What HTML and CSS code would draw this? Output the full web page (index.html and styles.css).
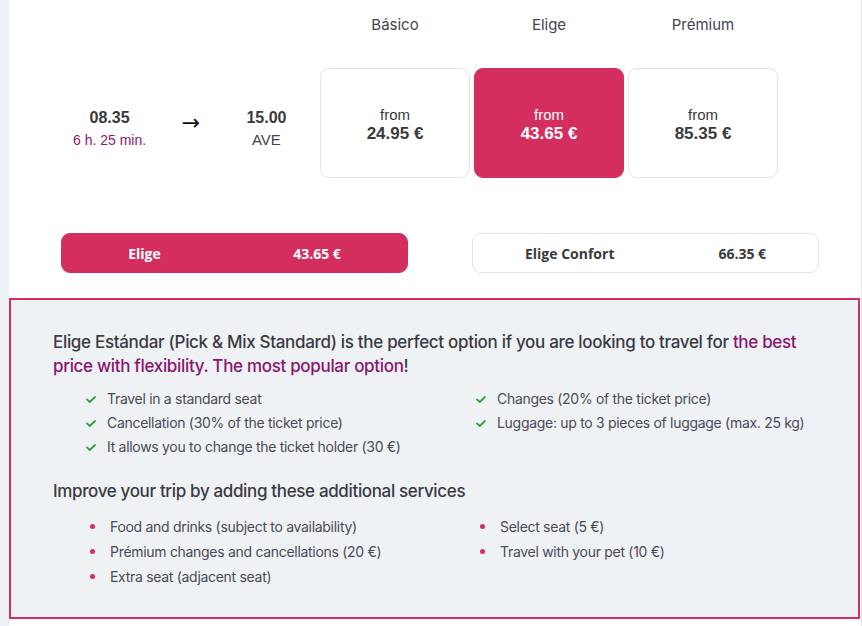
FILE: index.html
```html
<!DOCTYPE html>
<html lang="en">
<head>
<meta charset="utf-8">
<title>Fares</title>
<link rel="stylesheet" href="styles.css">
</head>
<body>
<div class="page">
  <section class="fares">
    <div class="times-head"></div>
    <div class="fare-label">Básico</div>
    <div class="fare-label">Elige</div>
    <div class="fare-label">Prémium</div>

    <div class="trip">
      <div class="stop">
        <div class="time">08.35</div>
        <div class="duration">6 h. 25 min.</div>
      </div>
      <div class="arrow">→</div>
      <div class="stop">
        <div class="time">15.00</div>
        <div class="train">AVE</div>
      </div>
    </div>
    <div class="card">
      <span class="from">from</span>
      <span class="price">24.95 €</span>
    </div>
    <div class="card card-active">
      <span class="from">from</span>
      <span class="price">43.65 €</span>
    </div>
    <div class="card">
      <span class="from">from</span>
      <span class="price">85.35 €</span>
    </div>
  </section>

  <section class="options">
    <div class="option option-active"><span>Elige</span><span>43.65 €</span></div>
    <div class="option"><span>Elige Confort</span><span>66.35 €</span></div>
  </section>

  <section class="info">
    <p class="lead">Elige Estándar (Pick &amp; Mix Standard) is the perfect option if you are looking to travel for <span class="hl">the best</span> <span class="hl">price with flexibility. The most popular option</span>!</p>
    <ul class="checks">
      <li><svg class="tick" viewBox="0 0 10 7" width="10" height="7"><path d="M1 3.4 L3.8 6 L9 1" fill="none" stroke="#2ea043" stroke-width="1.8" stroke-linecap="round" stroke-linejoin="round"/></svg>Travel in a standard seat</li>
      <li><svg class="tick" viewBox="0 0 10 7" width="10" height="7"><path d="M1 3.4 L3.8 6 L9 1" fill="none" stroke="#2ea043" stroke-width="1.8" stroke-linecap="round" stroke-linejoin="round"/></svg>Changes (20% of the ticket price)</li>
      <li><svg class="tick" viewBox="0 0 10 7" width="10" height="7"><path d="M1 3.4 L3.8 6 L9 1" fill="none" stroke="#2ea043" stroke-width="1.8" stroke-linecap="round" stroke-linejoin="round"/></svg>Cancellation (30% of the ticket price)</li>
      <li><svg class="tick" viewBox="0 0 10 7" width="10" height="7"><path d="M1 3.4 L3.8 6 L9 1" fill="none" stroke="#2ea043" stroke-width="1.8" stroke-linecap="round" stroke-linejoin="round"/></svg>Luggage: up to 3 pieces of luggage (max. 25 kg)</li>
      <li><svg class="tick" viewBox="0 0 10 7" width="10" height="7"><path d="M1 3.4 L3.8 6 L9 1" fill="none" stroke="#2ea043" stroke-width="1.8" stroke-linecap="round" stroke-linejoin="round"/></svg>It allows you to change the ticket holder (30 €)</li>
    </ul>
    <h3 class="sub">Improve your trip by adding these additional services</h3>
    <ul class="extras">
      <li>Food and drinks (subject to availability)</li>
      <li>Select seat (5 €)</li>
      <li>Prémium changes and cancellations (20 €)</li>
      <li>Travel with your pet (10 €)</li>
      <li>Extra seat (adjacent seat)</li>
    </ul>
  </section>
</div>
</body>
</html>
```

FILE: styles.css
```css
html, body {
  margin: 0;
  padding: 0;
}
body {
  background: #eef1f4;
  font-family: Inter, "Noto Sans", sans-serif;
  color: #3c3c46;
}
.page {
  margin-left: 9px;
  width: 852px;
  min-height: 626px;
  background: #fff;
  border-right: 1px solid #e3e5e8;
}

/* fare grid */
.fares {
  display: grid;
  grid-template-columns: 307px 150px 150px 150px;
  grid-template-rows: 20px 110px;
  column-gap: 4px;
  row-gap: 33px;
  padding-top: 15px;
}
.fare-label {
  text-align: center;
  font-size: 15px;
  line-height: 20px;
  color: #44444f;
}
.trip {
  display: flex;
  align-items: flex-start;
  padding-left: 51px;
  padding-top: 39px;
  font-family: "Liberation Sans", Arial, sans-serif;
}
.stop {
  width: 100px;
  text-align: center;
}
.time {
  font-size: 16px;
  font-weight: bold;
  line-height: 22px;
  color: #3a3a3a;
}
.duration {
  font-size: 14px;
  line-height: 22px;
  color: #8a1a6c;
}
.train {
  font-size: 15px;
  line-height: 22px;
  color: #444;
}
.arrow {
  width: 40px;
  margin: 0 6px 0 12px;
  text-align: center;
  font-size: 22px;
  line-height: 22px;
  padding-top: 5px;
  color: #111;
  font-family: "DejaVu Sans", sans-serif;
}
.card {
  box-sizing: border-box;
  border: 1px solid #e1e3e6;
  border-radius: 9px;
  display: flex;
  flex-direction: column;
  align-items: center;
  justify-content: center;
  font-family: "Liberation Sans", Arial, sans-serif;
  color: #3a3a3a;
  padding-top: 3px;
}
.card-active {
  background: #d42e5f;
  border-color: #d42e5f;
  color: #fff;
}
.from {
  font-size: 15px;
  line-height: 19px;
}
.price {
  font-size: 17px;
  font-weight: bold;
  line-height: 20px;
}

/* option buttons */
.options {
  display: flex;
  gap: 64px;
  padding-left: 52px;
  margin-top: 55px;
}
.option {
  box-sizing: border-box;
  width: 347px;
  height: 40px;
  border: 1px solid #e3e4e7;
  border-radius: 9px;
  display: flex;
  align-items: center;
  justify-content: space-around;
  font-family: "Open Sans", sans-serif;
  font-weight: 700;
  font-size: 14px;
  color: #3a3a3a;
}
.option-active {
  background: #d42e5f;
  border-color: #d42e5f;
  color: #fff;
}

/* info box */
.info {
  margin-top: 25px;
  margin-right: 1px;
  border: 2px solid #d42e5f;
  background: #eef2f5;
  padding: 30px 20px 28px 42px;
}
.lead {
  margin: 0;
  font-size: 17px;
  font-weight: 500;
  line-height: 24px;
  letter-spacing: -0.32px;
  color: #3a3a42;
}
.hl {
  color: #8a1471;
}
.checks, .extras {
  list-style: none;
  margin: 0;
  padding: 0;
  display: grid;
  grid-template-columns: 390px 1fr;
  font-size: 14px;
  letter-spacing: -0.3px;
  color: #4a4a56;
}
.checks {
  margin-top: 9px;
  padding-left: 33px;
}
.checks li {
  line-height: 24px;
  display: flex;
  align-items: center;
}
.tick {
  margin-right: 11px;
  flex: none;
}
.sub {
  margin: 20px 0 0;
  font-size: 17px;
  font-weight: 500;
  line-height: 24px;
  letter-spacing: -0.35px;
  color: #3a3a42;
}
.extras {
  margin-top: 11px;
  padding-left: 37px;
}
.extras li {
  line-height: 25px;
  display: flex;
  align-items: center;
}
.extras li::before {
  content: "";
  width: 5px;
  height: 5px;
  border-radius: 50%;
  background: #d42e5f;
  margin-right: 15px;
  flex: none;
}
```
